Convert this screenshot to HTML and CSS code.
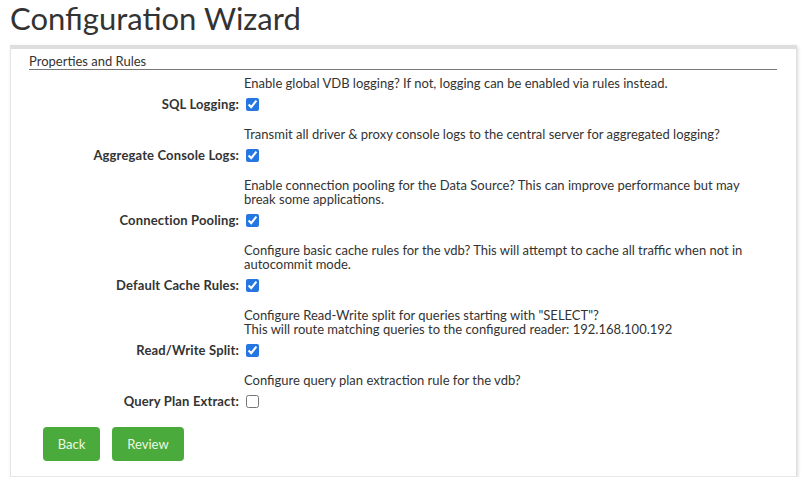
FILE: index.html
```html
<!DOCTYPE html>
<html>
<head>
<meta charset="utf-8">
<link rel="stylesheet" href="styles.css">
</head>
<body>
<h1 class="title">Configuration Wizard</h1>
<div class="panel">
  <div class="legend">Properties and Rules</div>
  <div class="rows">
    <div class="row">
      <div class="desc">Enable global VDB logging? If not, logging can be enabled via rules instead.</div>
      <label class="label">SQL Logging:</label>
      <div class="field"><input type="checkbox" class="check" checked></div>
    </div>
    <div class="row">
      <div class="desc">Transmit all driver &amp; proxy console logs to the central server for aggregated logging?</div>
      <label class="label">Aggregate Console Logs:</label>
      <div class="field"><input type="checkbox" class="check" checked></div>
    </div>
    <div class="row">
      <div class="desc">Enable connection pooling for the Data Source? This can improve performance but may break some applications.</div>
      <label class="label">Connection Pooling:</label>
      <div class="field"><input type="checkbox" class="check" checked></div>
    </div>
    <div class="row">
      <div class="desc">Configure basic cache rules for the vdb? This will attempt to cache all traffic when not in autocommit mode.</div>
      <label class="label">Default Cache Rules:</label>
      <div class="field"><input type="checkbox" class="check" checked></div>
    </div>
    <div class="row">
      <div class="desc"><div>Configure Read-Write split for queries starting with "SELECT"?</div><div>This will route matching queries to the configured reader: 192.168.100.192</div></div>
      <label class="label">Read/Write Split:</label>
      <div class="field"><input type="checkbox" class="check" checked></div>
    </div>
    <div class="row">
      <div class="desc">Configure query plan extraction rule for the vdb?</div>
      <label class="label">Query Plan Extract:</label>
      <div class="field"><input type="checkbox" class="check"></div>
    </div>
  </div>
  <div class="buttons">
    <button class="btn btn-back">Back</button>
    <button class="btn btn-review">Review</button>
  </div>
</div>
</body>
</html>
```
FILE: styles.css
```css
html, body {
  margin: 0;
  padding: 0;
  background: #fff;
}
body {
  font-family: Lato, "Open Sans", sans-serif;
  color: #333;
  font-size: 13px;
  padding-left: 10px;
}
.title {
  margin: 0 0 9px 0;
  font-size: 31px;
  line-height: 36px;
  font-weight: 400;
  color: #333;
}
.panel {
  width: 787px;
  box-sizing: border-box;
  border-top: 4px solid #dedede;
  border-left: 1px solid #e4e4e4;
  border-right: 1px solid #e0e0e0;
  border-bottom: 1px solid #e8e8e8;
  box-shadow: 1px 1px 3px rgba(0,0,0,0.15);
  padding: 5px 19px 15px 18px;
  background: #fff;
}
.legend {
  line-height: 15px;
  font-size: 13px;
  border-bottom: 1px solid #777;
  color: #333;
}
.rows {
  display: flex;
  flex-direction: column;
  gap: 13px;
  margin-top: 6px;
}
.row {
  display: grid;
  grid-template-columns: 210px 1fr;
  column-gap: 5px;
  row-gap: 4px;
}
.desc {
  grid-column: 2;
  line-height: 14px;
  padding-right: 20px;
}
.label {
  grid-column: 1;
  text-align: right;
  font-weight: 700;
  line-height: 20px;
  letter-spacing: 0.15px;
}
.field {
  grid-column: 2;
  height: 20px;
  display: flex;
  align-items: center;
}
.check {
  margin: 0 0 0 2px;
  width: 13px;
  height: 13px;
  accent-color: #2576e0;
}
.buttons {
  display: flex;
  gap: 12px;
  margin-top: 16px;
  padding-left: 14px;
}
.btn {
  font-family: Lato, "Open Sans", sans-serif;
  font-size: 13px;
  height: 34px;
  border: none;
  border-radius: 4px;
  background: #4aaa3c;
  color: #eef8e4;
  padding: 0;
  cursor: pointer;
}
.btn-back { width: 57px; }
.btn-review { width: 72px; }
```
